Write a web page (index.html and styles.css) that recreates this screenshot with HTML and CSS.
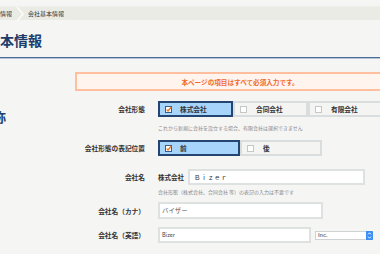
FILE: index.html
```html
<!DOCTYPE html>
<html lang="ja">
<head>
<meta charset="utf-8">
<title>会社基本情報</title>
<link rel="stylesheet" href="styles.css">
</head>
<body>
<nav class="crumbs">
  <span class="crumb first">基本情報</span>
  <svg class="chev" width="9" height="14" viewBox="0 0 9 14"><path d="M1 0 L7 7 L1 14" fill="none" stroke="#fbfbf8" stroke-width="1.6"/></svg>
  <span class="crumb">会社基本情報</span>
</nav>
<h1 class="title">会社基本情報</h1>
<div class="rule"></div>
<section class="section">
  <h2 class="sec-title">会社名称</h2>
  <div class="form">
    <div class="notice">本ページの項目はすべて必須入力です。</div>

    <div class="row r1">
      <div class="label">会社形態</div>
      <div class="opts">
        <div class="opt on"><svg class="cb-on" width="7" height="7" viewBox="0 0 7 7"><rect x="0.5" y="0.5" width="6" height="6" fill="#fff" stroke="#3b5b88"/><path d="M1.6 3.6 L3 5 L6.4 1" fill="none" stroke="#f07020" stroke-width="1.3"/></svg>株式会社</div>
        <div class="opt"><span class="cb"></span>合同会社</div>
        <div class="opt"><span class="cb"></span>有限会社</div>
      </div>
      <div class="hint h1">これから新規に会社を設立する場合、有限会社は選択できません</div>
    </div>

    <div class="row r2">
      <div class="label">会社形態の表記位置</div>
      <div class="opts wide">
        <div class="opt on"><svg class="cb-on" width="7" height="7" viewBox="0 0 7 7"><rect x="0.5" y="0.5" width="6" height="6" fill="#fff" stroke="#3b5b88"/><path d="M1.6 3.6 L3 5 L6.4 1" fill="none" stroke="#f07020" stroke-width="1.3"/></svg>前</div>
        <div class="opt"><span class="cb"></span>後</div>
      </div>
    </div>

    <div class="row r3">
      <div class="label">会社名</div>
      <div class="field">
        <span class="prefix">株式会社</span>
        <input class="inp name" type="text" value="Ｂｉｚｅｒ">
      </div>
      <div class="hint h2">会社形態（株式会社、合同会社 等）の表記の入力は不要です</div>
    </div>

    <div class="row r4">
      <div class="label">会社名（カナ）</div>
      <div class="field">
        <input class="inp kana" type="text" value="バイザー">
      </div>
    </div>

    <div class="row r5">
      <div class="label">会社名（英語）</div>
      <div class="field">
        <input class="inp eng" type="text" value="Bizer">
        <div class="select"><span class="sel-text">Inc.</span><span class="sel-btn"><svg width="7" height="9" viewBox="0 0 7 9"><path d="M2 3.4 L3.5 1.8 L5 3.4 M2 5.6 L3.5 7.2 L5 5.6" fill="none" stroke="#fff" stroke-width="0.9"/></svg></span></div>
      </div>
    </div>
  </div>
</section>
</body>
</html>
```

FILE: styles.css
```css
html, body {
  margin: 0;
  padding: 0;
}
body {
  background: #f5f5f4;
  overflow: hidden;
  font-family: "Noto Sans CJK JP", "Noto Sans", sans-serif;
  color: #333;
}
.crumbs {
  margin-top: 6px;
  height: 14px;
  display: flex;
  align-items: center;
  background: #ebebe5;
  border-top: 1px solid #f0f0eb;
  box-sizing: border-box;
}
.crumb {
  font-size: 6px;
  line-height: 8px;
  color: #333;
}
.crumb.first {
  margin-left: -12px;
}
.chev {
  margin-left: 4px;
  flex: none;
}
.crumb:last-child {
  margin-left: 3px;
}
.title {
  margin: 13px 0 0 -42px;
  font-size: 14px;
  line-height: 14px;
  font-weight: 700;
  color: #1e3d6b;
  white-space: nowrap;
}
.rule {
  margin-top: 10px;
  height: 1px;
  background: #4a6c9b;
  box-shadow: 0 1px 0 #b6c4d6;
}
.section {
  display: flex;
  margin-top: 14px;
}
.sec-title {
  flex: none;
  width: 52px;
  margin: 38px 0 0 -46px;
  font-size: 13px;
  line-height: 13px;
  font-weight: 700;
  color: #1e3d6b;
  white-space: nowrap;
}
.form {
  flex: 1;
  min-width: 0;
}
.notice {
  margin-left: 69px;
  width: 330px;
  height: 19px;
  box-sizing: border-box;
  border: 2px solid #ffbf9e;
  background: #fff4ee;
  display: flex;
  align-items: center;
  justify-content: center;
  color: #f06a2a;
  font-size: 6.6px;
  font-weight: 700;
}
.row {
  display: grid;
  grid-template-columns: 139px auto;
  column-gap: 13px;
  align-items: center;
}
.label {
  text-align: right;
  font-size: 6.7px;
  line-height: 10px;
  font-weight: 700;
  color: #333;
  white-space: nowrap;
}
.r1 { margin-top: 10px; }
.r2 { margin-top: 8px; }
.r3 { margin-top: 13px; }
.r4 { margin-top: 6px; }
.r5 { margin-top: 8px; }
.opts {
  display: flex;
}
.opt {
  flex: none;
  width: 75px;
  height: 16px;
  box-sizing: border-box;
  border: 2px solid #d9dddd;
  background: #f4f4f3;
  display: flex;
  align-items: center;
  padding-left: 5px;
  font-size: 6.7px;
  font-weight: 700;
  color: #333;
  white-space: nowrap;
}
.opts.wide .opt {
  width: 82px;
}
.opt.on {
  background: #a7d4fb;
  border-color: #244571;
}
.cb {
  flex: none;
  width: 5px;
  height: 5px;
  border: 1px solid #c4c8c8;
  background: #fff;
  margin-right: 9px;
}
.cb-on {
  flex: none;
  margin-right: 8px;
}
.hint {
  grid-column: 2;
  font-size: 5px;
  line-height: 8px;
  color: #888;
  white-space: nowrap;
}
.h1 { margin-top: 7px; }
.h2 { margin-top: 3px; }
.field {
  display: flex;
  align-items: center;
}
.prefix {
  font-size: 6.5px;
  font-weight: 700;
  color: #333;
  margin-right: 4px;
  white-space: nowrap;
}
.inp {
  box-sizing: border-box;
  height: 16px;
  margin: 0;
  border: 2px solid #dde1e0;
  border-radius: 0;
  background: #fff;
  font-family: "Noto Sans CJK JP", "Noto Sans", sans-serif;
  color: #333;
  outline: none;
}
.inp.name {
  width: 177px;
  padding: 0 0 0 4px;
  font-size: 6.5px;
  letter-spacing: 0.2px;
}
.inp.kana {
  width: 165px;
  height: 17px;
  padding: 0 0 0 2px;
  font-size: 6.4px;
  color: #555;
}
.inp.eng {
  width: 153px;
  padding: 0 0 0 2px;
  font-size: 5.5px;
  color: #444;
}
.select {
  margin-left: 4px;
  width: 58px;
  height: 9px;
  box-sizing: border-box;
  border: 1px solid #cfd2d2;
  background: #fff;
  display: flex;
  align-items: center;
  justify-content: space-between;
}
.sel-text {
  padding-left: 2px;
  font-family: "Liberation Sans", sans-serif;
  font-size: 5.5px;
  font-weight: 700;
  color: #777;
}
.sel-btn {
  width: 7px;
  height: 9px;
  margin: -1px -1px -1px 0;
  background: #3b8ef4;
  border-radius: 0 1px 1px 0;
  display: flex;
}
```
